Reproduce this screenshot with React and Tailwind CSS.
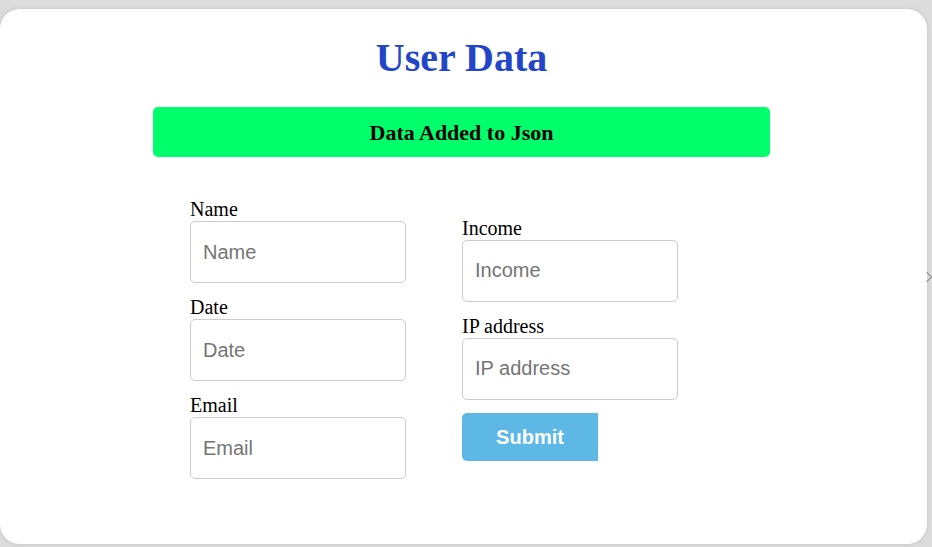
import { useState } from "react";

const LEFT_FIELDS = [
  { key: "name", label: "Name" },
  { key: "date", label: "Date" },
  { key: "email", label: "Email" },
];

const RIGHT_FIELDS = [
  { key: "income", label: "Income" },
  { key: "ip", label: "IP address" },
];

function Field({ label, value, onChange, last }) {
  return (
    <div className={last ? "" : "mb-[13px]"}>
      <label className="block text-[20px] leading-[23px] text-black font-['Liberation_Serif',serif]">
        {label}
      </label>
      <input
        type="text"
        placeholder={label}
        value={value}
        onChange={onChange}
        className="block h-[62px] w-[216px] rounded-[5px] border border-[#cccccc] bg-white px-3 text-[20px] text-black placeholder:text-[#757575] font-['Liberation_Sans',Arial,sans-serif] outline-none"
      />
    </div>
  );
}

export default function App() {
  const [form, setForm] = useState({ name: "", date: "", email: "", income: "", ip: "" });

  const update = (key) => (e) => setForm((prev) => ({ ...prev, [key]: e.target.value }));

  return (
    <div className="relative h-[547px] w-[932px] overflow-hidden bg-[#dcdcdc] pt-[9px]">
      <div className="h-[535px] w-[927px] rounded-[20px] bg-white shadow-[0_0_4px_rgba(0,0,0,0.12)] pt-[26px]">
        <div className="flex flex-col items-center pr-[4px]">
          <h1 className="text-[40px] leading-[46px] font-bold text-[#2346c8] font-['Liberation_Serif',serif]">
            User Data
          </h1>
          <div className="mt-[26px] flex h-[50px] w-[617px] items-center justify-center rounded-[5px] bg-[#00ff6a]">
            <h2 className="text-[22px] font-bold text-black font-['Liberation_Serif',serif]">
              Data Added to Json
            </h2>
          </div>
        </div>

        <form
          onSubmit={(e) => e.preventDefault()}
          className="ml-[190px] mt-[41px] flex items-center gap-[56px]"
        >
          <div>
            {LEFT_FIELDS.map(({ key, label }, i) => (
              <Field
                key={key}
                label={label}
                value={form[key]}
                onChange={update(key)}
                last={i === LEFT_FIELDS.length - 1}
              />
            ))}
          </div>
          <div>
            {RIGHT_FIELDS.map(({ key, label }) => (
              <Field key={key} label={label} value={form[key]} onChange={update(key)} />
            ))}
            <button
              type="submit"
              className="block h-[48px] w-[136px] rounded-l-[5px] bg-[#5db8e5] text-[20px] font-bold text-white font-['Liberation_Sans',Arial,sans-serif]"
            >
              Submit
            </button>
          </div>
        </form>
      </div>

      {/* slider arrow peeking at the right edge */}
      <svg
        className="absolute left-[926px] top-[271px]"
        width="6"
        height="12"
        viewBox="0 0 6 12"
        fill="none"
        stroke="#6b6b6b"
        strokeWidth="1"
      >
        <polyline points="0.5,1 5.5,6 0.5,11" />
      </svg>
    </div>
  );
}
